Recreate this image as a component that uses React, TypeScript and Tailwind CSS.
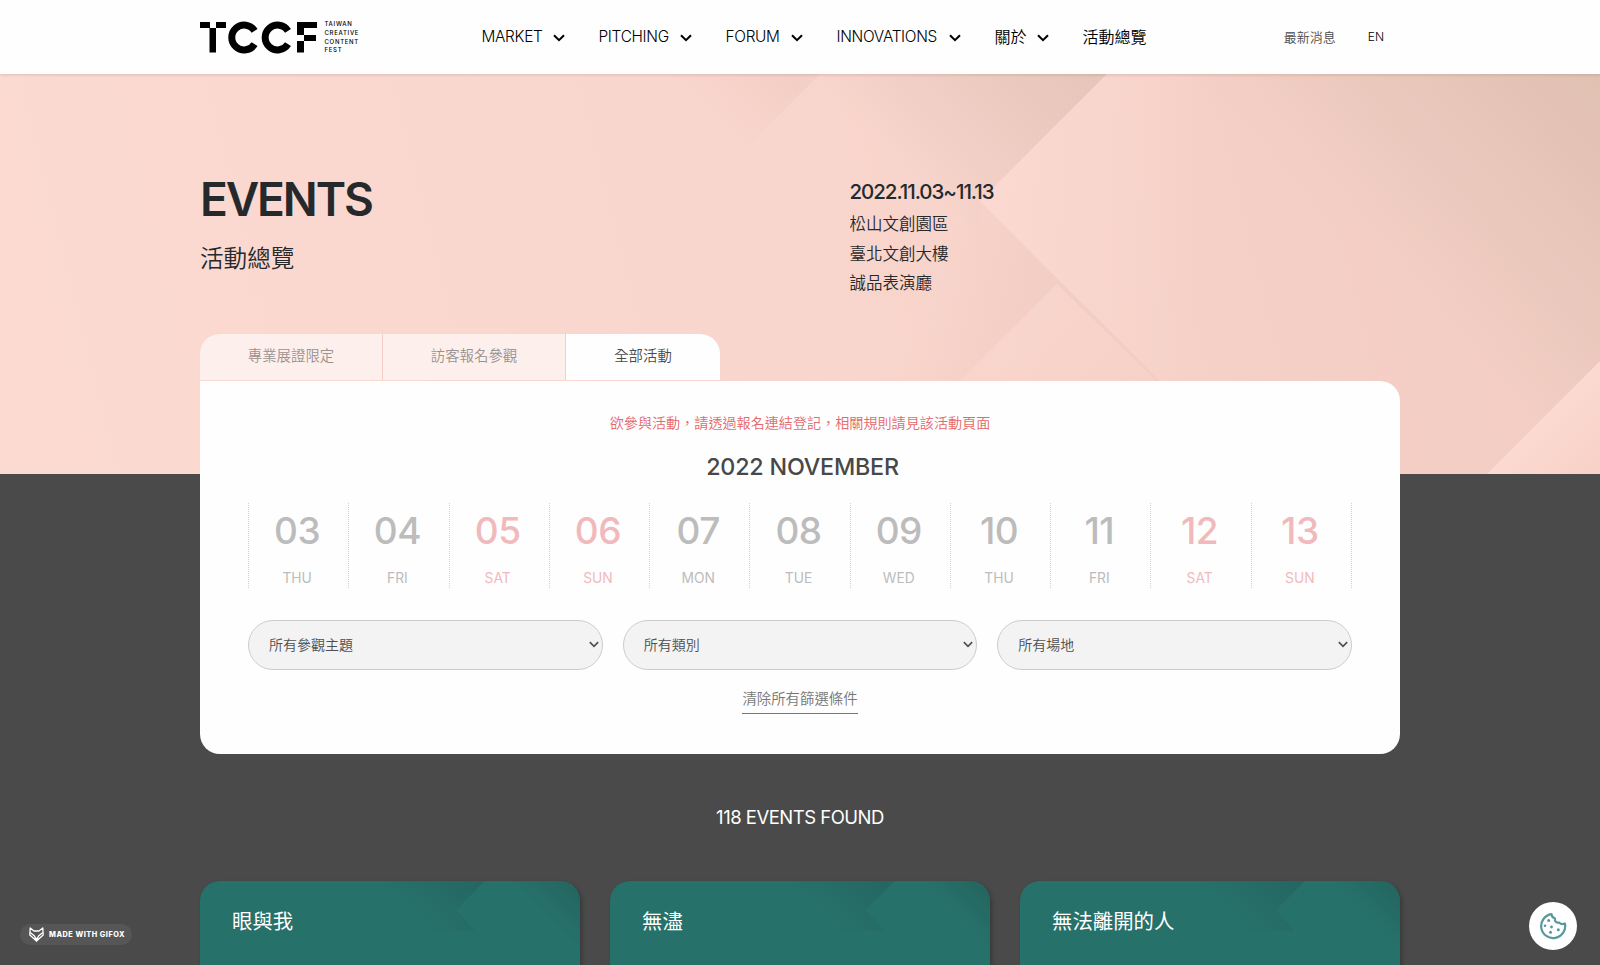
import { clsx } from 'clsx';

interface NavItem {
  label: string;
  width: string;
  menu?: boolean;
}

interface Day {
  date: string;
  day: string;
  weekend?: boolean;
}

const NAV: NavItem[] = [
  { label: 'MARKET',      width: 'w-[61px]',  menu: true },
  { label: 'PITCHING',    width: 'w-[71px]',  menu: true },
  { label: 'FORUM',       width: 'w-[55px]',  menu: true },
  { label: 'INNOVATIONS', width: 'w-[102px]', menu: true },
  { label: '關於',         width: 'w-[32px] text-[16px] tracking-normal', menu: true },
  { label: '活動總覽',      width: 'w-[64px] text-[16px] tracking-normal' },
];

const TABS = ['專業展證限定', '訪客報名參觀', '全部活動'];

const DAYS: Day[] = [
  { date: '03', day: 'THU' },
  { date: '04', day: 'FRI' },
  { date: '05', day: 'SAT', weekend: true },
  { date: '06', day: 'SUN', weekend: true },
  { date: '07', day: 'MON' },
  { date: '08', day: 'TUE' },
  { date: '09', day: 'WED' },
  { date: '10', day: 'THU' },
  { date: '11', day: 'FRI' },
  { date: '12', day: 'SAT', weekend: true },
  { date: '13', day: 'SUN', weekend: true },
];

const FILTERS = ['所有參觀主題', '所有類別', '所有場地'];
const EVENTS = ['眼與我', '無濜', '無法離開的人'];

function Chevron({ className }: { className?: string }) {
  return (
    <svg viewBox="0 0 12 8" className={className} fill="none" stroke="currentColor" strokeWidth="2">
      <path d="M1 1.2 6 6.2 11 1.2" />
    </svg>
  );
}

function Logo() {
  return (
    <div className="flex items-start mt-[2px]">
      <svg width="118" height="33" viewBox="0 0 118 33" role="img" aria-label="TCCF">
        <rect x="0" y="1" width="10" height="6" />
        <rect x="16" y="1" width="10" height="6" />
        <rect x="9.5" y="7" width="6.5" height="24.5" />
        <path d="M54.6 23.2A12.4 12.4 0 1 1 54.6 9.800" fill="none" stroke="#000" strokeWidth="7" />
        <path d="M88 23.2A12.4 12.4 0 1 1 88 9.800" fill="none" stroke="#000" strokeWidth="7" />
        <rect x="97" y="1" width="20" height="6" />
        <rect x="97" y="7" width="7" height="7" />
        <rect x="104" y="14" width="12" height="6" />
        <rect x="97" y="20" width="7" height="11.5" />
      </svg>
      <div className="ml-[6.5px] mt-[-1px] text-[6px] leading-[8.7px] font-medium tracking-[0.7px]">
        <div>TAIWAN</div>
        <div>CREATIVE</div>
        <div>CONTENT</div>
        <div>FEST</div>
      </div>
    </div>
  );
}

function Header() {
  return (
    <header className="h-[74px] bg-[#fefefe] shadow-[0_1px_3px_rgba(0,0,0,0.12)] relative z-10">
      <div className="w-[1200px] mx-auto h-full flex items-center">
        <div className="w-[281.5px]"><Logo /></div>
        <nav className="flex items-center gap-[34px] text-[15.4px] tracking-[-0.3px] font-[350] text-black">
          {NAV.map(item => (
            <a key={item.label} className="flex items-center whitespace-nowrap">
              <span className={item.width}>{item.label}</span>
              {item.menu && <Chevron className="w-3 h-2 ml-[10px] mt-[2px]" />}
            </a>
          ))}
        </nav>
        <div className="ml-auto mr-[16px] flex items-center gap-8 text-[13px] font-[350]">
          <a className="text-[#4a4a4a] mt-px">最新消息</a>
          <a className="text-[12px] text-black">EN</a>
        </div>
      </div>
    </header>
  );
}

function HeroArt() {
  return (
    <svg className="absolute inset-0 w-full h-full" viewBox="0 0 1600 400" preserveAspectRatio="none">
      <defs>
        <linearGradient id="base" x1="0" y1="400" x2="1600" y2="0" gradientUnits="userSpaceOnUse">
          <stop offset="0" stopColor="#fbdad1" />
          <stop offset="0.5" stopColor="#f9d6cd" />
          <stop offset="0.75" stopColor="#f5d0c7" />
          <stop offset="1" stopColor="#f2ccc2" />
        </linearGradient>
        <linearGradient id="corner" x1="1340" y1="160" x2="1560" y2="-60" gradientUnits="userSpaceOnUse">
          <stop offset="0" stopColor="#dfc0b1" stopOpacity="0" />
          <stop offset="1" stopColor="#dfc0b1" />
        </linearGradient>
        <linearGradient id="shade" x1="920" y1="110" x2="1060" y2="-30" gradientUnits="userSpaceOnUse">
          <stop offset="0" stopColor="#e6c5ba" stopOpacity="0" />
          <stop offset="1" stopColor="#e6c5ba" />
        </linearGradient>
        <linearGradient id="light" x1="1000" y1="100" x2="1200" y2="120" gradientUnits="userSpaceOnUse">
          <stop offset="0" stopColor="#fbd9d0" />
          <stop offset="1" stopColor="#fbd9d0" stopOpacity="0" />
        </linearGradient>
        <linearGradient id="ridge" x1="960" y1="300" x2="1060" y2="400" gradientUnits="userSpaceOnUse">
          <stop offset="0" stopColor="#fbd9d0" />
          <stop offset="1" stopColor="#f8d4cb" />
        </linearGradient>
        <linearGradient id="under" x1="930" y1="200" x2="1060" y2="240" gradientUnits="userSpaceOnUse">
          <stop offset="0" stopColor="#f3cdc4" stopOpacity="0" />
          <stop offset="1" stopColor="#f3cdc4" />
        </linearGradient>
        <linearGradient id="left" x1="735" y1="85" x2="800" y2="20" gradientUnits="userSpaceOnUse">
          <stop offset="0" stopColor="#f2ccc3" stopOpacity="0" />
          <stop offset="1" stopColor="#f2ccc3" stopOpacity="0.7" />
        </linearGradient>
        <linearGradient id="edge" x1="1544" y1="343" x2="1590" y2="389" gradientUnits="userSpaceOnUse">
          <stop offset="0" stopColor="#fcdad1" />
          <stop offset="1" stopColor="#f8d2c9" />
        </linearGradient>
      </defs>
      <rect width="1600" height="400" fill="url(#base)" />
      <path d="M600 0H820L700 120H600Z" fill="url(#left)" />
      <path d="M820 0H1107L980 127V250H700V120Z" fill="url(#shade)" />
      <path d="M980 127 1253 400H867V240Z" fill="url(#under)" />
      <path d="M1107 0 980 127 1253 400H1500V0Z" fill="url(#light)" />
      <path d="M1057 210 867 400H1160L1170 320Z" fill="url(#ridge)" opacity="0.6" />
      <path d="M1107 0 1100 400H1600V0Z" fill="url(#corner)" />
      <path d="M1600 287V400H1487Z" fill="url(#edge)" />
    </svg>
  );
}

function Hero() {
  return (
    <section className="relative h-[400px]">
      <HeroArt />
      <div className="relative w-[1200px] mx-auto flex pt-[95px] text-[#26292b]">
        <div className="w-[649.5px]">
          <h1 className="text-[46px] leading-[60px] font-semibold tracking-[-2.1px]">EVENTS</h1>
          <p className="mt-[12px] text-[23.6px] leading-9 font-[350]">活動總覽</p>
        </div>
        <div className="pt-[8px]">
          <p className="text-[20.5px] leading-[30px] font-medium tracking-[-1.05px]">2022.11.03~11.13</p>
          <div className="mt-[3px] text-[16.5px] leading-[29.6px] font-[350]">
            <p>松山文創園區</p>
            <p>臺北文創大樓</p>
            <p>誠品表演廳</p>
          </div>
        </div>
      </div>
    </section>
  );
}

function Tabs() {
  return (
    <div className="flex w-[520px] h-[46px] mb-px rounded-t-[20px] overflow-hidden">
      {TABS.map((tab, i) => (
        <button
          key={tab}
          className={clsx(
            'h-full text-[14.4px] pb-[3px] whitespace-nowrap font-[350]',
            i < 2 ? 'w-[183px] bg-[#fdf0ec] text-[#9a9191] border-r border-[#f3cfc8]' : 'w-[154px] bg-[#fefefe] text-[#4a4a4a]'
          )}
        >
          {tab}
        </button>
      ))}
    </div>
  );
}

function Calendar() {
  return (
    <div className="grid grid-cols-11 h-[85px] border-r border-dotted border-[#d0d0d0]">
      {DAYS.map(d => (
        <div
          key={d.date}
          className={clsx(
            'flex flex-col items-center pr-[3px] border-l border-dotted border-[#d0d0d0]',
            d.weekend ? 'text-[#f0babc]' : 'text-[#bcbcbc]'
          )}
        >
          <span className="mt-[6px] text-[37px] leading-[44px] tracking-[-0.5px] font-[450]">{d.date}</span>
          <span className="mt-[15px] text-[13.8px] leading-5">{d.day}</span>
        </div>
      ))}
    </div>
  );
}

function FilterCard() {
  return (
    <div className="h-[373px] bg-[#fefefe] rounded-[20px] rounded-tl-none px-12 pt-[31px] text-center">
      <p className="text-[14.1px] leading-[22px] font-[350] text-[#e4696b]">
        欲參與活動，請透過報名連結登記，相關規則請見該活動頁面
      </p>
      <h2 className="mt-[16px] mb-[20px] pl-[5px] text-[23.3px] leading-[33px] font-medium tracking-[-0.2px] text-[#484848]">
        2022 NOVEMBER
      </h2>
      <Calendar />
      <div className="mt-8 grid grid-cols-3 gap-5">
        {FILTERS.map(f => (
          <button
            key={f}
            className="h-[50px] pl-[20px] pr-[3px] pb-px flex items-center justify-between rounded-full border border-[#cccccc] bg-[#f3f3f3] text-[14px] font-[350] text-[#4f4f4f]"
          >
            {f}
            <Chevron className="w-[10px] h-[7px]" />
          </button>
        ))}
      </div>
      <a className="mt-4 inline-block h-[28px] pt-px text-[14.4px] leading-6 font-[350] text-[#777] border-b border-[#777]">
        清除所有篩選條件
      </a>
    </div>
  );
}

function EventCard({ title }: { title: string }) {
  return (
    <article className="relative h-[220px] rounded-[20px] overflow-hidden bg-[#27716b] shadow-[2px_2px_4px_rgba(0,0,0,0.25)]">
      <svg className="absolute inset-0" width="380" height="220" viewBox="0 0 380 220">
        <defs>
          <linearGradient id="fold" x1="225" y1="50" x2="285" y2="-10" gradientUnits="userSpaceOnUse">
            <stop offset="0" stopColor="#246560" stopOpacity="0" />
            <stop offset="1" stopColor="#246560" />
          </linearGradient>
          <linearGradient id="cardCorner" x1="345" y1="35" x2="385" y2="-5" gradientUnits="userSpaceOnUse">
            <stop offset="0" stopColor="#23625c" stopOpacity="0" />
            <stop offset="1" stopColor="#23625c" />
          </linearGradient>
        </defs>
        <path d="M120 0H285L256 29 275 50H120Z" fill="url(#fold)" />
        <path d="M300 0H380V110Z" fill="url(#cardCorner)" />
      </svg>
      <h3 className="relative px-8 pt-[25px] text-[20.4px] leading-8 text-white">{title}</h3>
    </article>
  );
}

function GifoxBadge() {
  return (
    <div className="fixed left-[20px] top-[924px] w-[112px] h-[21px] pl-[9px] flex items-center rounded-full bg-[#565656] text-white">
      <svg width="15" height="15" viewBox="0 0 15 15" fill="none" stroke="currentColor" strokeWidth="1.3" strokeLinejoin="round">
        <path d="M1.2 1 5 4h5l3.800-3 .4 7-6.700 6L.8 8Z" />
        <path d="M1.200 5.500 5.500 9 7.500 13.500 9.500 9 13.800 5.500" />
        <path d="M6 11.500h3L7.500 14Z" fill="currentColor" />
      </svg>
      <span className="ml-[5px] mt-px text-[7.3px] font-extrabold tracking-[0.52px] whitespace-nowrap">MADE WITH GIFOX</span>
    </div>
  );
}

function CookieButton() {
  return (
    <button className="fixed left-[1529px] top-[902px] size-12 rounded-full bg-white flex items-center justify-center text-[#57999a]">
      <svg width="28" height="28" viewBox="0 0 28 28" fill="none" stroke="currentColor" strokeWidth="2.2">
        <path d="M12.500 2.200A12 12 0 1 0 25.900 11.500C23.500 12.500 21.500 12 20 10.500 17.500 11.200 15.300 9 16 6.500 14 6 12.700 4.500 12.500 2.200Z" strokeLinejoin="round" />
        <g fill="currentColor" stroke="none">
          <circle cx="9.700" cy="8.500" r="1.500" />
          <circle cx="6" cy="13.700" r="1.300" />
          <circle cx="12.500" cy="15" r="1.400" />
          <circle cx="19.300" cy="17.700" r="1.500" />
          <circle cx="11.500" cy="20.300" r="1.500" />
        </g>
      </svg>
    </button>
  );
}

export default function App() {
  return (
    <div className="h-[965px] overflow-hidden bg-[#4a4a4a] font-['Inter','Noto_Sans_CJK_TC',sans-serif]">
      <Header />
      <Hero />
      <main className="relative w-[1200px] mx-auto -mt-[140px]">
        <Tabs />
        <FilterCard />
        <p className="mt-[48px] text-center text-[18.5px] leading-[30px] tracking-[-0.5px] text-white">118 EVENTS FOUND</p>
        <div className="mt-[49px] grid grid-cols-3 gap-[30px]">
          {EVENTS.map(title => <EventCard key={title} title={title} />)}
        </div>
      </main>
      <GifoxBadge />
      <CookieButton />
    </div>
  );
}
